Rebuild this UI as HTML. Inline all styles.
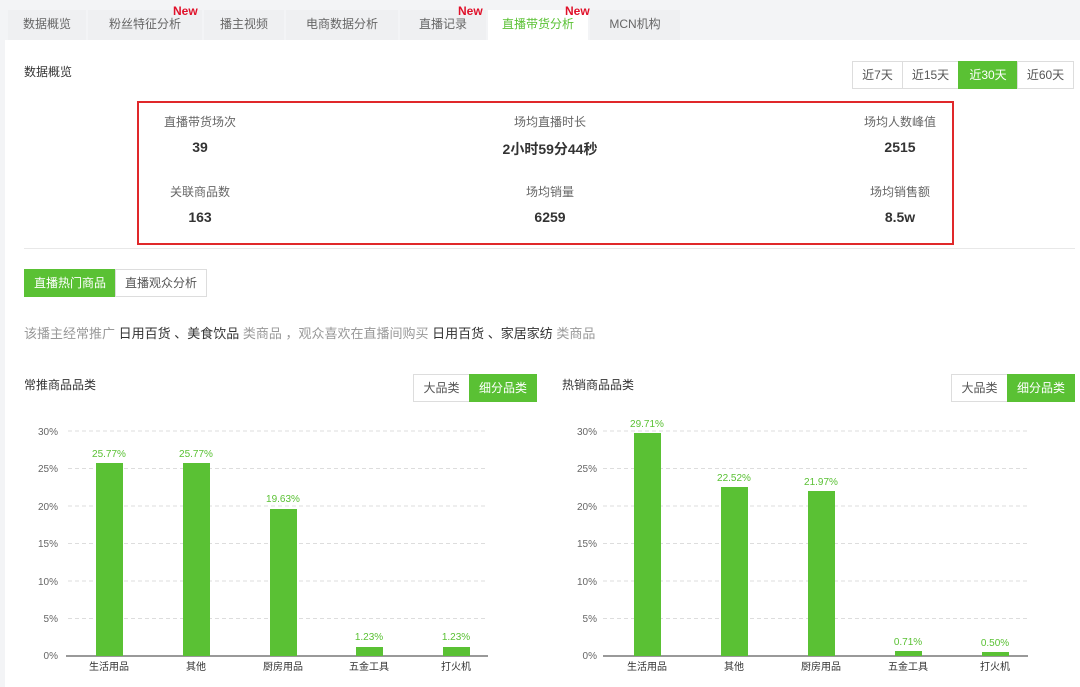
<!DOCTYPE html><html><head><meta charset="utf-8"><style>
*{margin:0;padding:0;box-sizing:border-box}
body{width:1080px;height:687px;overflow:hidden;background:#f3f4f6;font-family:"Liberation Sans","Noto Sans CJK SC",sans-serif;position:relative;color:#333}
.a{position:absolute;white-space:nowrap}
.tab{position:absolute;top:10px;height:30px;line-height:28px;font-size:12px;color:#666;text-align:center;background:#eff0f2}
.new{position:absolute;color:#e0112a;font-weight:bold;font-size:12px;top:4px}
.main{position:absolute;left:5px;top:40px;width:1075px;height:647px;background:#fff}
.btn{position:absolute;height:28px;line-height:26px;font-size:12px;text-align:center;border:1px solid #ddd;color:#555;background:#fff}
.g{background:#5ac134;color:#fff;border-color:#5ac134}
.lbl{font-size:12px;color:#666;text-align:center;position:absolute}
.val{font-size:14px;font-weight:bold;color:#333;text-align:center;position:absolute}
</style></head><body>
<div class="tab" style="left:8px;width:78px">数据概览</div>
<div class="tab" style="left:88px;width:114px">粉丝特征分析</div>
<div class="tab" style="left:204px;width:80px">播主视频</div>
<div class="tab" style="left:286px;width:112px">电商数据分析</div>
<div class="tab" style="left:400px;width:86px">直播记录</div>
<div class="tab" style="left:488px;width:100px;background:#fff;color:#5ac134">直播带货分析</div>
<div class="tab" style="left:590px;width:90px">MCN机构</div>
<div class="new" style="left:173px">New</div>
<div class="new" style="left:458px">New</div>
<div class="new" style="left:565px">New</div>
<div class="main"></div>
<div class="a" style="left:24px;top:63px;font-size:12px;color:#333">数据概览</div>
<div class="btn" style="left:852px;top:61px;width:51px">近7天</div>
<div class="btn" style="left:902px;top:61px;width:57px">近15天</div>
<div class="btn g" style="left:958px;top:61px;width:60px">近30天</div>
<div class="btn" style="left:1017px;top:61px;width:57px">近60天</div>
<div class="a" style="left:137px;top:101px;width:817px;height:144px;border:2px solid #e0282a"></div>
<div class="lbl" style="left:140px;top:113px;width:120px">直播带货场次</div>
<div class="val" style="left:140px;top:139px;width:120px">39</div>
<div class="lbl" style="left:490px;top:113px;width:120px">场均直播时长</div>
<div class="val" style="left:460px;top:139px;width:180px">2小时59分44秒</div>
<div class="lbl" style="left:840px;top:113px;width:120px">场均人数峰值</div>
<div class="val" style="left:840px;top:139px;width:120px">2515</div>
<div class="lbl" style="left:140px;top:183px;width:120px">关联商品数</div>
<div class="val" style="left:140px;top:209px;width:120px">163</div>
<div class="lbl" style="left:490px;top:183px;width:120px">场均销量</div>
<div class="val" style="left:490px;top:209px;width:120px">6259</div>
<div class="lbl" style="left:840px;top:183px;width:120px">场均销售额</div>
<div class="val" style="left:840px;top:209px;width:120px">8.5w</div>
<div class="a" style="left:24px;top:248px;width:1051px;height:1px;background:#e8e8e8"></div>
<div class="btn g" style="left:24px;top:269px;width:92px">直播热门商品</div>
<div class="btn" style="left:115px;top:269px;width:92px">直播观众分析</div>
<div class="a" style="left:24px;top:323px;font-size:13px;color:#999">该播主经常推广 <span style="color:#333">日用百货 、美食饮品</span> 类商品 ，观众喜欢在直播间购买 <span style="color:#333">日用百货 、家居家纺</span> 类商品</div>
<div class="a" style="left:24px;top:376px;font-size:12px;color:#333">常推商品品类</div>
<div class="btn" style="left:413px;top:374px;width:57px">大品类</div>
<div class="btn g" style="left:469px;top:374px;width:68px">细分品类</div>
<div class="a" style="left:562px;top:376px;font-size:12px;color:#333">热销商品品类</div>
<div class="btn" style="left:951px;top:374px;width:57px">大品类</div>
<div class="btn g" style="left:1007px;top:374px;width:68px">细分品类</div>
<svg class="a" style="left:0;top:0" width="1080" height="687" font-family="Liberation Sans,Noto Sans CJK SC,sans-serif" font-size="10">
<g stroke="#ddd" stroke-dasharray="4,3">
<line x1="68" x2="488" y1="431" y2="431"/><line x1="68" x2="488" y1="468.5" y2="468.5"/><line x1="68" x2="488" y1="506" y2="506"/><line x1="68" x2="488" y1="543.5" y2="543.5"/><line x1="68" x2="488" y1="581" y2="581"/><line x1="68" x2="488" y1="618.5" y2="618.5"/>
<line x1="603" x2="1028" y1="431" y2="431"/><line x1="603" x2="1028" y1="468.5" y2="468.5"/><line x1="603" x2="1028" y1="506" y2="506"/><line x1="603" x2="1028" y1="543.5" y2="543.5"/><line x1="603" x2="1028" y1="581" y2="581"/><line x1="603" x2="1028" y1="618.5" y2="618.5"/>
</g>
<line x1="66" x2="488" y1="656" y2="656" stroke="#333"/>
<line x1="603" x2="1028" y1="656" y2="656" stroke="#333"/>
<g fill="#666" text-anchor="end">
<text x="58" y="435">30%</text><text x="58" y="472">25%</text><text x="58" y="510">20%</text><text x="58" y="547">15%</text><text x="58" y="585">10%</text><text x="58" y="622">5%</text><text x="58" y="659">0%</text>
<text x="597" y="435">30%</text><text x="597" y="472">25%</text><text x="597" y="510">20%</text><text x="597" y="547">15%</text><text x="597" y="585">10%</text><text x="597" y="622">5%</text><text x="597" y="659">0%</text>
</g>
<g fill="#5ac134">
<rect x="96" y="463" width="27" height="193"/><rect x="183" y="463" width="27" height="193"/><rect x="270" y="509" width="27" height="147"/><rect x="356" y="647" width="27" height="9"/><rect x="443" y="647" width="27" height="9"/>
<rect x="634" y="433" width="27" height="223"/><rect x="721" y="487" width="27" height="169"/><rect x="808" y="491" width="27" height="165"/><rect x="895" y="651" width="27" height="5"/><rect x="982" y="652" width="27" height="4"/>
</g>
<g fill="#5ac134" text-anchor="middle">
<text x="109" y="457">25.77%</text><text x="196" y="457">25.77%</text><text x="283" y="502">19.63%</text><text x="369" y="640">1.23%</text><text x="456" y="640">1.23%</text>
<text x="647" y="427">29.71%</text><text x="734" y="481">22.52%</text><text x="821" y="485">21.97%</text><text x="908" y="645">0.71%</text><text x="995" y="646">0.50%</text>
</g>
<g fill="#333" text-anchor="middle">
<text x="109" y="670">生活用品</text><text x="196" y="670">其他</text><text x="283" y="670">厨房用品</text><text x="369" y="670">五金工具</text><text x="456" y="670">打火机</text>
<text x="647" y="670">生活用品</text><text x="734" y="670">其他</text><text x="821" y="670">厨房用品</text><text x="908" y="670">五金工具</text><text x="995" y="670">打火机</text>
</g>
</svg>
</body></html>
